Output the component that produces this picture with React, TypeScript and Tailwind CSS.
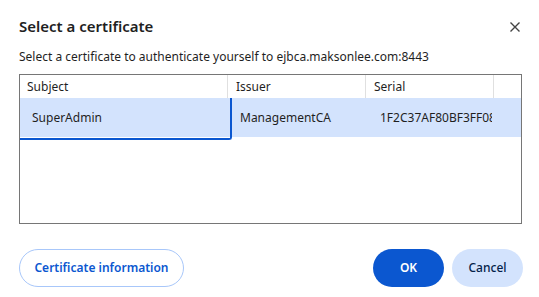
export default function App() {
  return (
    <div
      className="flex h-[297px] w-[539px] flex-col bg-white pl-[19px] pr-[16px] text-[#1f1f1f]"
      style={{ fontFamily: '"Noto Sans", "Open Sans", sans-serif' }}
    >
      <div className="flex h-[47px] items-center justify-between pt-[6px]">
        <h1 className="text-[15px] font-semibold leading-none">Select a certificate</h1>
        <svg width="10" height="10" viewBox="0 0 10 10" className="mr-[3px]">
          <path d="M0.5 0.5 L9.5 9.5 M9.5 0.5 L0.5 9.5" stroke="#444" strokeWidth="1.4" />
        </svg>
      </div>
      <p className="mt-[2px] h-[25px] text-[12px] leading-[16px]">
        Select a certificate to authenticate yourself to ejbca.maksonlee.com:8443
      </p>
      <div className="flex h-[150px] w-[503px] flex-col border border-[#767676] text-[12px]">
        <div className="flex h-[23px] items-center">
          <div className="flex h-full w-[208px] items-center border-r border-[#e0e0e0] pl-[7px]">Subject</div>
          <div className="flex h-full w-[138px] items-center border-r border-[#e0e0e0] pl-[8px]">Issuer</div>
          <div className="flex h-full w-[128px] items-center border-r border-[#e0e0e0] pl-[8px]">Serial</div>
        </div>
        <div className="flex h-[39px] bg-[#d3e3fd]">
          <div className="relative flex h-full w-[212px] items-center pl-[12px]">
            SuperAdmin
            <div className="absolute -bottom-[3px] left-0 top-0 right-0 rounded-br-[3px] border-b-[2px] border-r-[2px] border-[#0b57d0]" />
          </div>
          <div className="flex h-full w-[134px] items-center pl-[8px]">ManagementCA</div>
          <div className="flex h-full w-[126px] items-center overflow-hidden whitespace-nowrap pl-[14px]">
            <span className="overflow-hidden">1F2C37AF80BF3FF08</span>
          </div>
        </div>
      </div>
      <div className="mt-[25px] flex items-center justify-between">
        <button className="h-[38px] w-[165px] rounded-full border border-[#a8c7fa] text-[12px] font-semibold text-[#0b57d0]">
          Certificate information
        </button>
        <div className="flex gap-[8px]">
          <button className="h-[38px] w-[71px] rounded-full bg-[#0b57d0] text-[12px] font-semibold text-white">OK</button>
          <button className="h-[38px] w-[71px] rounded-full bg-[#d3e3fd] text-[12px] font-medium text-[#041e49]">Cancel</button>
        </div>
      </div>
    </div>
  );
}
